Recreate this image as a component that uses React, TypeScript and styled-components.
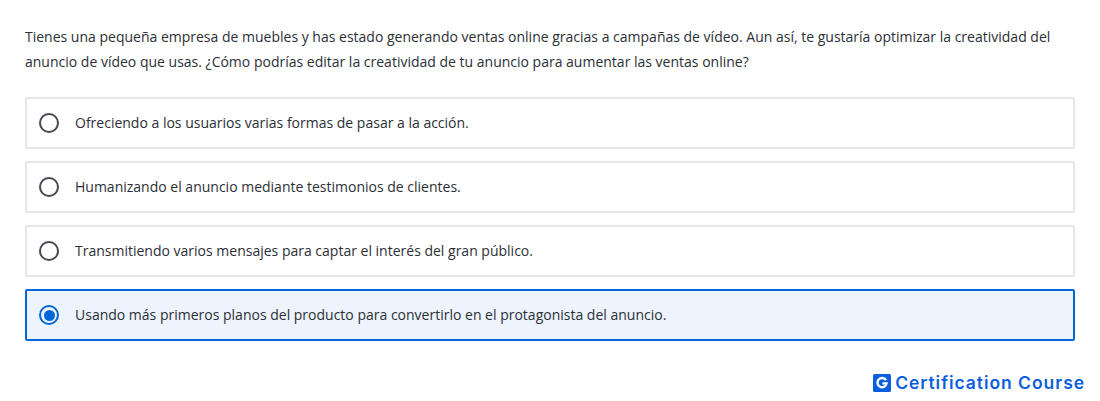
import React from "react";
import styled, { createGlobalStyle } from "styled-components";

const Global = createGlobalStyle`
  html, body { margin: 0; padding: 0; background: #fff; }
  body { width: 1100px; height: 401px; overflow: hidden; font-family: "Open Sans", sans-serif; }
`;

const Page = styled.div`
  width: 1100px;
  height: 401px;
  padding: 24px 25px 0;
  box-sizing: border-box;
  display: flex;
  flex-direction: column;
`;

const Question = styled.p`
  margin: 0 0 23px;
  font-size: 14px;
  line-height: 25px;
  color: #2b2f36;
`;

const Options = styled.div`
  display: flex;
  flex-direction: column;
  gap: 12px;
`;

const Option = styled.label<{ $selected?: boolean }>`
  display: flex;
  align-items: center;
  height: 52px;
  box-sizing: border-box;
  padding-left: 12px;
  gap: 16px;
  font-size: 14px;
  color: #2b2f36;
  border: 2px solid ${(p) => (p.$selected ? "#0366d6" : "#e6e6e6")};
  border-radius: 2px;
  background: ${(p) => (p.$selected ? "#eef4fe" : "#fff")};
`;

const OptionText = styled.span`
  padding-bottom: 2px;
`;

const Radio = styled.span<{ $selected?: boolean }>`
  width: 16px;
  height: 16px;
  border: 2px solid ${(p) => (p.$selected ? "#0366d6" : "#434a54")};
  border-radius: 50%;
  display: flex;
  align-items: center;
  justify-content: center;
  flex: none;
  &::after {
    content: "";
    width: 11px;
    height: 11px;
    border-radius: 50%;
    background: ${(p) => (p.$selected ? "#0366d6" : "transparent")};
  }
`;

const Brand = styled.div`
  display: flex;
  justify-content: flex-end;
  align-items: center;
  gap: 4px;
  margin-top: 31px;
  margin-right: -10px;
  color: #0b5fdc;
  font-family: "Inter", sans-serif;
  font-weight: 600;
  font-size: 17.5px;
  letter-spacing: 0.95px;
`;

const options = [
  "Ofreciendo a los usuarios varias formas de pasar a la acción.",
  "Humanizando el anuncio mediante testimonios de clientes.",
  "Transmitiendo varios mensajes para captar el interés del gran público.",
  "Usando más primeros planos del producto para convertirlo en el protagonista del anuncio.",
];

export default function App() {
  return (
    <Page>
      <Global />
      <Question>
        Tienes una pequeña empresa de muebles y has estado generando ventas online gracias a campañas de vídeo. Aun así, te gustaría optimizar la creatividad del anuncio de vídeo que usas. ¿Cómo podrías editar la creatividad de tu anuncio para aumentar las ventas online?
      </Question>
      <Options>
        {options.map((o, i) => (
          <Option key={o} $selected={i === 3}>
            <Radio $selected={i === 3} />
            <OptionText>{o}</OptionText>
          </Option>
        ))}
      </Options>
      <Brand>
        <svg width="18" height="18" viewBox="0 0 18 18">
          <rect width="18" height="18" rx="1.5" fill="#0b5fdc" />
          <path d="M13 6.2A4.6 4.6 0 1 0 13.6 9.4H9.4" fill="none" stroke="#fff" strokeWidth="2.4" />
        </svg>
        Certification Course
      </Brand>
    </Page>
  );
}
